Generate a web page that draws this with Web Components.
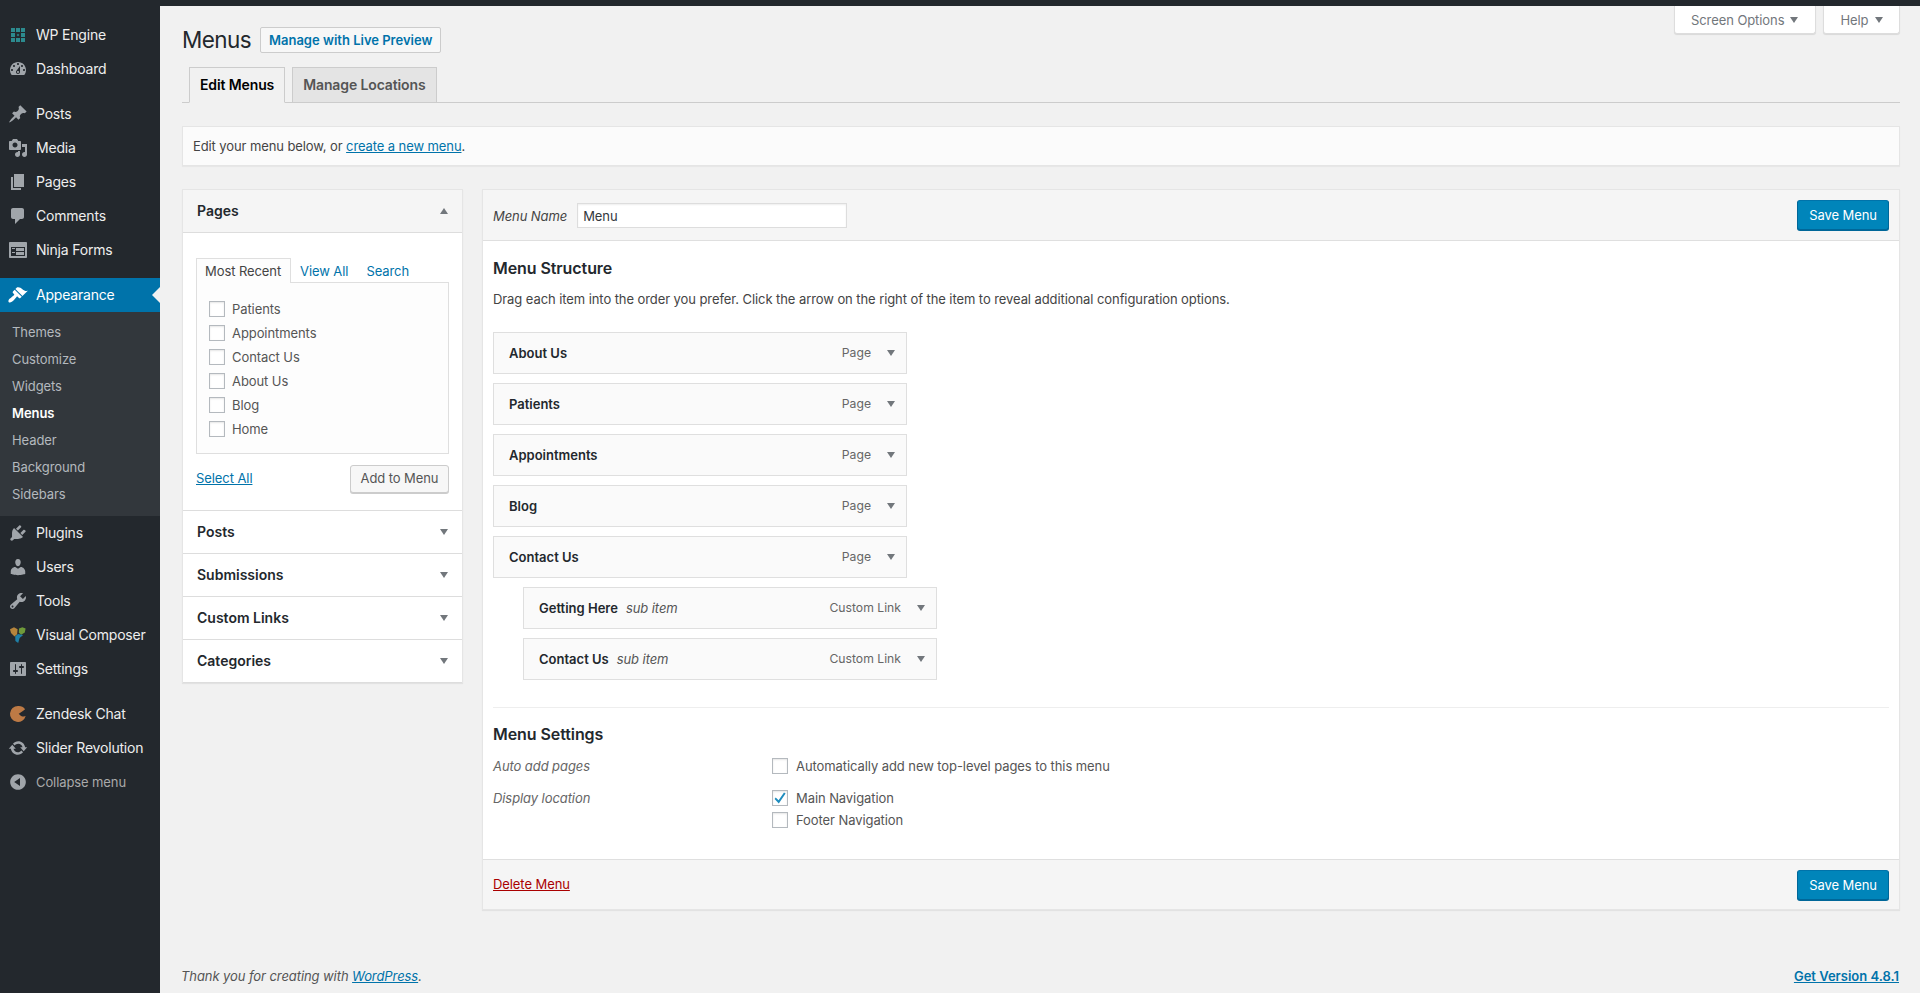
<!DOCTYPE html>
<html lang="en"><head><meta charset="utf-8"><title>Menus</title>
<style>
html,body{margin:0;height:993px;overflow:hidden;background:#f1f1f1}
body{font:13px/1.4 Inter,"Liberation Sans",sans-serif;color:#444;font-kerning:normal;letter-spacing:-.08px}
wp-admin{display:grid;grid-template-columns:160px 1fr;grid-template-rows:6px 1fr;height:993px}
</style></head><body>
<wp-admin></wp-admin>
<script>
const I={
 dash:'<path d="M3.76 16h12.48c1.1-1.37 1.76-3.11 1.76-5 0-4.42-3.58-8-8-8s-8 3.58-8 8c0 1.89.66 3.63 1.76 5zM10 4c.55 0 1 .45 1 1s-.45 1-1 1-1-.45-1-1 .45-1 1-1zM6 6c.55 0 1 .45 1 1s-.45 1-1 1-1-.45-1-1 .45-1 1-1zm8 0c.55 0 1 .45 1 1s-.45 1-1 1-1-.45-1-1 .45-1 1-1zm-5.37 5.55L12 7v6c0 1.1-.9 2-2 2s-2-.9-2-2c0-.57.24-1.08.63-1.45zM4 10c.55 0 1 .45 1 1s-.45 1-1 1-1-.45-1-1 .45-1 1-1zm12 0c.55 0 1 .45 1 1s-.45 1-1 1-1-.45-1-1 .45-1 1-1zm-5 3c0-.55-.45-1-1-1s-1 .45-1 1 .45 1 1 1 1-.45 1-1z"/>',
 pin:'<path d="M10.44 3.02l1.82-1.82 6.36 6.35-1.83 1.82c-1.05-.68-2.48-.57-3.41.36l-.75.75c-.92.93-1.04 2.35-.35 3.41l-1.83 1.82-2.41-2.41-2.8 2.79c-.42.42-3.38 2.71-3.8 2.29s1.86-3.39 2.28-3.81l2.79-2.79L4.1 9.36l1.83-1.82c1.05.69 2.48.57 3.4-.36l.75-.75c.93-.92 1.05-2.35.36-3.41z"/>',
 media:'<path d="M13 11V4c0-.55-.45-1-1-1h-1.67L9 1H5L3.67 3H2c-.55 0-1 .45-1 1v7c0 .55.45 1 1 1h10c.55 0 1-.45 1-1zM7 4.5c1.38 0 2.5 1.12 2.5 2.5S8.38 9.5 7 9.5 4.5 8.38 4.5 7 5.62 4.5 7 4.5zM14 6h5v10.5c0 1.38-1.12 2.5-2.5 2.5S14 17.88 14 16.5s1.12-2.5 2.5-2.5c.17 0 .34.02.5.05V9h-3V6zm-4 8.05V13h2v3.5c0 1.38-1.12 2.5-2.5 2.5S7 17.88 7 16.5 8.12 14 9.5 14c.17 0 .34.02.5.05z"/>',
 page:'<path d="M6 15V2h10v13H6zm-1 1h8v2H3V5h2v11z"/>',
 comment:'<path d="M5 2h9c1.1 0 2 .9 2 2v7c0 1.1-.9 2-2 2h-2l-5 5v-5H5c-1.1 0-2-.9-2-2V4c0-1.1.9-2 2-2z"/>',
 forms:'<path d="M2 2h16c.55 0 1 .45 1 1v14c0 .55-.45 1-1 1H2c-.55 0-1-.45-1-1V3c0-.55.45-1 1-1zm15 14V7H3v9h14zM4 8v1h3V8H4zm4 0v3h8V8H8zm-4 4v1h3v-1H4zm4 0v3h8v-3H8z"/>',
 brush:'<path d="M14.48 11.06L7.41 3.99l1.5-1.5c.5-.56 2.3-.47 3.51.32 1.21.8 1.43 1.28 2.91 2.1 1.18.64 2.45 1.26 4.45.85zm-.71.71L6.7 4.7 4.93 6.47c-.39.39-.39 1.02 0 1.41l1.06 1.06c.39.39.39 1.03 0 1.42-.6.6-1.43 1.11-2.21 1.69-.35.26-.7.53-1.01.84C1.43 13.23.4 14.91.4 15.9c0 .99.6 1.58 1.58 1.58s2.67-1.04 3.99-2.36c.31-.31.58-.66.84-1.01.58-.78 1.09-1.61 1.69-2.21.39-.39 1.02-.39 1.41 0l1.06 1.06c.39.39 1.02.39 1.41 0z"/>',
 plug:'<path d="M13.11 4.36L9.87 7.6 8 5.73l3.24-3.24c.35-.34 1.05-.2 1.56.32.52.51.66 1.21.31 1.55zm-8 1.77l.91-1.12 9.01 9.01-1.19.84c-.71.71-2.63 1.16-3.82 1.16H6.14L4.9 17.26c-.59.59-1.54.59-2.12 0-.59-.58-.59-1.53 0-2.12l1.24-1.24v-3.88c0-1.13.4-3.19 1.09-3.89zm7.26 3.97l3.24-3.24c.34-.35 1.04-.21 1.55.31.52.51.66 1.21.31 1.55l-3.24 3.25z"/>',
 user:'<path d="M10 9.25c-2.27 0-2.73-3.44-2.73-3.44C7 4.02 7.82 2 9.97 2c2.16 0 2.98 2.02 2.71 3.81 0 0-.41 3.44-2.68 3.44zm0 2.57L12.72 10c2.39 0 4.52 2.33 4.52 4.53v2.49s-3.65 1.13-7.24 1.13c-3.65 0-7.24-1.13-7.24-1.13v-2.49c0-2.25 1.94-4.48 4.47-4.48z"/>',
 tool:'<path d="M16.68 9.77c-1.34 1.34-3.3 1.67-4.95.99l-5.41 6.52c-.99.99-2.59.99-3.58 0s-.99-2.59 0-3.57l6.52-5.42c-.68-1.65-.35-3.61.99-4.95 1.28-1.28 3.12-1.62 4.72-1.06l-2.89 2.89 2.82 2.82 2.86-2.87c.53 1.58.18 3.39-1.08 4.65zM3.81 16.21c.4.39 1.04.39 1.43 0 .4-.4.4-1.04 0-1.43-.39-.4-1.03-.4-1.43 0-.39.39-.39 1.03 0 1.43z"/>',
 set:'<path d="M18 16V4c0-.55-.45-1-1-1H3c-.55 0-1 .45-1 1v12c0 .55.45 1 1 1h14c.55 0 1-.45 1-1zM8 11h1c.55 0 1 .45 1 1s-.45 1-1 1H8v1.5c0 .28-.22.5-.5.5s-.5-.22-.5-.5V13H6c-.55 0-1-.45-1-1s.45-1 1-1h1V5.5c0-.28.22-.5.5-.5s.5.22.5.5V11zm5-2h-1c-.55 0-1-.45-1-1s.45-1 1-1h1V5.5c0-.28.22-.5.5-.5s.5.22.5.5V7h1c.55 0 1 .45 1 1s-.45 1-1 1h-1v5.5c0 .28-.22.5-.5.5s-.5-.22-.5-.5V9z"/>',
 sync:'<path d="M10.2 3.28c3.53 0 6.43 2.61 6.92 6h2.08l-3.5 4-3.5-4h2.32c-.45-1.97-2.21-3.45-4.32-3.45-1.45 0-2.73.71-3.54 1.78L4.95 5.66C6.23 4.2 8.11 3.28 10.2 3.28zm-.4 13.44c-3.52 0-6.43-2.61-6.92-6H.8l3.5-4c1.17 1.33 2.33 2.67 3.5 4H5.48c.45 1.97 2.21 3.45 4.32 3.45 1.45 0 2.73-.71 3.54-1.78l1.71 1.95c-1.28 1.46-3.15 2.38-5.25 2.38z"/>',
 collapse:'<path d="M10 2.16c4.33 0 7.84 3.51 7.84 7.84s-3.51 7.84-7.84 7.84S2.16 14.33 2.16 10 5.71 2.16 10 2.16zm2 11.72V6.12L6.18 9.97z"/>',
 wpe:'<path fill="#2c8a8e" d="M3 3h4v4H3zM8 3h4v4H8zM13 3h4v4h-4zM3 8h4v4H3zM13 8h4v4h-4zM3 13h4v4H3zM8 13h4v4H8zM13 13h4v4h-4z"/><path fill="#2c8a8e" opacity=".75" d="M8.9 8.9h2.2v2.2H8.9z"/>',
 vc:'<path fill="#b5843c" d="M2 4.2l4-2 3.6 2-.5 5-2.6 2.3L3 8z"/><path fill="#6f9a3a" d="M11 3.6l3.4-1.4 3.2 1.4-.8 4-3.6 2.2-2.4-2z"/><path fill="#1f7fa6" d="M7.2 11.2 10 9l5.2 1-3.6 3-1.4 5-2.8-2z"/>',
 zen:'<path fill="#bd7a45" d="M10 2a8 8 0 1 0 7.7 10.1c-1 .6-2.9.7-4.6-.2-1.1-.6-1.9-1.4-2.4-2.1.8-.5 3.3-2 6.4-4.6A8 8 0 0 0 10 2z"/>'
};
const ic=n=>`<svg viewBox="0 0 20 20" width="20" height="20" fill="currentColor" aria-hidden="true">${I[n]}</svg>`;

function def(tag,css,html){
 customElements.define(tag,class extends HTMLElement{
  connectedCallback(){
   if(this.shadowRoot)return;
   const s=this.attachShadow({mode:'open'});
   s.innerHTML=`<style>${css}</style>`+(typeof html==='function'?html(this):html);
  }
 });
}

def('side-item',`
 :host{display:flex;align-items:center;height:34px;font-size:14px;letter-spacing:-.2px;color:#eee;padding-left:8px;box-sizing:border-box;position:relative}
 svg{color:#a0a5aa;flex:none}
 span{margin-left:8px;line-height:18px;position:relative;top:-.5px}
 :host([current]){background:#0073aa;color:#fff}
 :host([current]) svg{color:#fff}
 :host([current])::after{content:"";position:absolute;right:0;top:9px;border:8px solid transparent;border-right-color:#f1f1f1;border-left:0}
 :host([dim]){color:#aaa;font-size:13px;letter-spacing:-.1px}
`,h=>`${ic(h.getAttribute('icon'))}<span><slot></slot></span>`);

def('side-sub',`
 :host{display:block;background:#32373c;padding:7px 0 8px;font-size:13px;color:#b4b9be}
 ::slotted(div){height:27px;line-height:27px;padding-left:12px}
`,`<slot></slot>`);

def('side-bar',`
 :host{display:block;background:#23282d;padding-top:12px;grid-column:1;grid-row:2}
 ::slotted(hr){border:0;height:11px;margin:0}
`,`<slot></slot>`);

def('top-tab',`
 :host{display:block;background:#fff;border:1px solid #ddd;border-top:0;border-radius:0 0 3px 3px;box-shadow:0 1px 1px rgba(0,0,0,.1);height:27px;box-sizing:content-box;color:#72777c;font-size:13px;line-height:28px;padding:0 16.5px}
 i{display:inline-block;border:4.5px solid transparent;border-top:6px solid #72777c;border-bottom:0;margin-left:6px;vertical-align:2px}
`,`<slot></slot><i></i>`);

def('page-head',`
 :host{display:flex;justify-content:space-between;align-items:flex-start;height:61px}
 .l{display:flex;align-items:center;padding-top:21px;height:26px}
 h1{margin:0;font-size:22.5px;letter-spacing:-.6px;font-weight:400;color:#23282d;line-height:26px;width:68px}
 a{margin-left:10px;border:1px solid #ccc;border-radius:2px;background:#f7f7f7;color:#0073aa;font-size:13px;letter-spacing:0;font-weight:600;height:24px;line-height:24px;padding:0 8px;display:block}
 .r{display:flex;gap:7px}
`,`<div class="l"><h1>Menus</h1><a>Manage with Live Preview</a></div><div class="r"><slot></slot></div>`);

def('nav-tabs',`
 :host{display:flex;gap:7px;padding-left:7px;border-bottom:1px solid #ccc;height:35px}
 ::slotted(div){border:1px solid #ccc;background:#e4e4e4;color:#555;font-size:14px;letter-spacing:-.12px;font-weight:600;line-height:24px;padding:5px 10px;height:24px;box-sizing:content-box}
 ::slotted(.on){background:#f1f1f1;color:#000;border-bottom-color:#f1f1f1}
`,`<slot></slot>`);

def('manage-box',`
 :host{display:block;margin-top:23px;background:#fbfbfb;border:1px solid #e5e5e5;box-shadow:0 1px 1px rgba(0,0,0,.04);height:38px;line-height:38px;padding-left:10px;font-size:13px;letter-spacing:-.1px;color:#444}
 a{color:#0073aa;text-decoration:underline}
`,`Edit your menu below, or <a>create a new menu</a>.`);

def('acc-sec',`
 :host{display:block;border-bottom:1px solid #ddd;background:#fff}
 .h{display:flex;justify-content:space-between;align-items:center;height:42px;padding:0 14px;font-size:14px;letter-spacing:0;font-weight:600;color:#23282d}
 :host([open]) .h{background:#f5f5f5;border-bottom:1px solid #ddd;height:43px;box-sizing:border-box}
 i{border:4.5px solid transparent;border-top:6px solid #72777c;border-bottom:0}
 :host([open]) i{border-top:0;border-bottom:6px solid #72777c}
`,h=>`<div class="h"><span>${h.getAttribute('label')}</span><i></i></div><slot></slot>`);

def('acc-panel',`
 :host{display:block;background:#fff;border:1px solid #e5e5e5;border-bottom:0;box-shadow:0 1px 1px rgba(0,0,0,.06);width:279px;flex:none;align-self:flex-start}
`,`<slot></slot>`);

def('check-box',`
 :host{display:inline-block;flex:none;width:14px;height:14px;border:1px solid #b4b9be;background:#fff;box-shadow:inset 0 1px 2px rgba(0,0,0,.1);position:relative}
 svg{position:absolute;left:-1px;top:-1px}
`,h=>h.hasAttribute('checked')?`<svg width="16" height="16" viewBox="0 0 16 16"><path fill="#1e8cbe" d="M6.6 10.2 3.7 7.6 2.6 8.9l4.2 4.5L13.6 3.5 12 2.4z"/></svg>`:``);

def('check-row',`
 :host{display:flex;align-items:center;height:16px;gap:var(--gap,7px);font-size:13px;color:#555}
`,h=>`<check-box ${h.hasAttribute('checked')?'checked':''}></check-box><span><slot></slot></span>`);

def('page-picker',`
 :host{display:block;padding:25px 13px 17px 13px;font-size:13px}
 .t{display:flex;height:24px}
 .t a{color:#0073aa;line-height:26px;padding:0 9px}
 .t b{font-weight:400;color:#444;background:#fdfdfd;border:1px solid #dfdfdf;border-bottom:0;height:25px;line-height:24px;padding:0 8px;position:relative;z-index:1;box-sizing:border-box;width:95px}
 .box{border:1px solid #dfdfdf;background:#fdfdfd;height:172px;box-sizing:border-box;padding:18px 0 0 12px;display:flex;flex-direction:column;gap:8px}
 .f{display:flex;justify-content:space-between;align-items:center;margin-top:10.5px}
 .f a{color:#0073aa;text-decoration:underline}
 button{font:inherit;letter-spacing:inherit;color:#555;background:#f7f7f7;border:1px solid #ccc;border-radius:3px;box-shadow:0 1px 0 #ccc;height:28px;width:99px;padding:0}
`,`<div class="t"><b>Most Recent</b><a>View All</a><a>Search</a></div>
<div class="box"><slot></slot></div>
<div class="f"><a>Select All</a><button>Add to Menu</button></div>`);

def('save-btn',`
 :host{display:block;width:90px;height:28px;background:#0085ba;border:1px solid;border-color:#0073aa #006799 #006799;border-radius:3px;box-shadow:0 1px 0 #006799;color:#fff;font-size:13px;line-height:28px;text-align:center}
`,`<slot></slot>`);

def('menu-item',`
 :host{display:flex;align-items:center;width:397px;height:40px;border:1px solid #dfdfdf;background:#fafafa;font-size:13px;margin-bottom:9px;padding-left:15px;box-sizing:content-box;color:#23282d}
 :host([sub]){margin-left:30px}
 b{font-weight:600;letter-spacing:0}
 em{margin-left:8px;color:#555;font-style:italic}
 .ty{margin-left:auto;color:#666;font-size:12.2px;letter-spacing:0}
 i{border:4.5px solid transparent;border-top:6px solid #72777c;border-bottom:0;margin:0 11px 0 16px}
`,h=>`<b><slot></slot></b>${h.hasAttribute('sub')?'<em>sub item</em>':''}<span class="ty">${h.getAttribute('type')}</span><i></i>`);

def('menu-panel',`
 :host{display:block;flex:1;min-width:0;background:#fff;border:1px solid #e5e5e5;box-shadow:0 1px 1px rgba(0,0,0,.06);font-size:13px;height:721px;box-sizing:border-box;--gap:8px}
 .top,.bot{background:#f5f5f5;display:flex;align-items:center;justify-content:space-between;padding:0 10px}
 .top{height:50px;border-bottom:1px solid #dfdfdf}
 .bot{height:49px;border-top:1px solid #dfdfdf}
 .nm{display:flex;align-items:center;padding-top:1px}
 label{font-style:italic;color:#444;position:relative;top:1px}
 .inp{margin-left:10px;height:23px;line-height:25px;border:1px solid #ddd;background:#fff;box-shadow:inset 0 1px 2px rgba(0,0,0,.07);color:#32373c;padding-left:5px;box-sizing:content-box;width:263px}
 .body{padding:0 10px;height:618px;box-sizing:border-box}
 h3{font-size:16px;font-weight:600;color:#23282d;margin:0;line-height:22px}
 .s1{padding-top:16px}
 p{margin:9px 0 0;line-height:22px;color:#444}
 .items{margin-top:22px}
 .div{border-top:1px solid #eee;margin-top:27px;padding-top:15px}
 .row{display:grid;grid-template-columns:279px 1fr}
 .lab{font-style:italic;color:#666;line-height:16px}
 .col{display:flex;flex-direction:column;gap:6px}
 a{color:#a00;text-decoration:underline}
`,`<div class="top"><div class="nm"><label>Menu Name</label><div class="inp">Menu</div></div><save-btn>Save Menu</save-btn></div>
<div class="body"><div class="s1"><h3>Menu Structure</h3><p>Drag each item into the order you prefer. Click the arrow on the right of the item to reveal additional configuration options.</p></div>
<div class="items"><slot></slot></div>
<div class="div"><h3>Menu Settings</h3>
<div class="row" style="margin-top:13px"><div class="lab">Auto add pages</div><div class="col"><check-row>Automatically add new top-level pages to this menu</check-row></div></div>
<div class="row" style="margin-top:16px"><div class="lab">Display location</div><div class="col"><check-row checked>Main Navigation</check-row><check-row>Footer Navigation</check-row></div></div>
</div></div>
<div class="bot"><a>Delete Menu</a><save-btn>Save Menu</save-btn></div>`);

def('page-foot',`
 :host{display:flex;justify-content:space-between;margin:56px 1px 0 -1px;font-size:13px;line-height:20px;color:#555}
 span{font-style:italic}
 a{color:#0073aa;text-decoration:underline}
 b{font-weight:600;letter-spacing:0;color:#0073aa;text-decoration:underline}
`,`<span>Thank you for creating with <a>WordPress</a>.</span><b>Get Version 4.8.1</b>`);

def('page-main',`
 :host{display:block;grid-column:2;grid-row:2;padding:0 20px 0 22px;min-width:0}
 .cols{display:flex;gap:19px;margin-top:23px}
`,`<slot name="head"></slot><div class="cols"><slot name="l"></slot><slot name="r"></slot></div><slot name="foot"></slot>`);

def('wp-admin',`
 :host{display:grid;grid-template-columns:160px 1fr;grid-template-rows:6px 1fr;height:993px}
 .bar{grid-column:1/3;background:#23282d}
`,`<div class="bar"></div>
<side-bar>
 <side-item icon="wpe">WP Engine</side-item><side-item icon="dash">Dashboard</side-item><hr>
 <side-item icon="pin">Posts</side-item><side-item icon="media">Media</side-item><side-item icon="page">Pages</side-item><side-item icon="comment">Comments</side-item><side-item icon="forms">Ninja Forms</side-item><hr>
 <side-item icon="brush" current>Appearance</side-item>
 <side-sub><div>Themes</div><div>Customize</div><div>Widgets</div><div style="color:#fff;font-weight:600">Menus</div><div>Header</div><div>Background</div><div>Sidebars</div></side-sub>
 <side-item icon="plug">Plugins</side-item><side-item icon="user">Users</side-item><side-item icon="tool">Tools</side-item><side-item icon="vc">Visual Composer</side-item><side-item icon="set">Settings</side-item><hr>
 <side-item icon="zen">Zendesk Chat</side-item><side-item icon="sync">Slider Revolution</side-item><side-item icon="collapse" dim>Collapse menu</side-item>
</side-bar>
<page-main>
 <div slot="head">
  <page-head><top-tab>Screen Options</top-tab><top-tab>Help</top-tab></page-head>
  <nav-tabs><div class="on">Edit Menus</div><div>Manage Locations</div></nav-tabs>
  <manage-box></manage-box>
 </div>
 <acc-panel slot="l">
  <acc-sec label="Pages" open><page-picker>
   <check-row>Patients</check-row><check-row>Appointments</check-row><check-row>Contact Us</check-row><check-row>About Us</check-row><check-row>Blog</check-row><check-row>Home</check-row>
  </page-picker></acc-sec>
  <acc-sec label="Posts"></acc-sec><acc-sec label="Submissions"></acc-sec><acc-sec label="Custom Links"></acc-sec><acc-sec label="Categories"></acc-sec>
 </acc-panel>
 <menu-panel slot="r">
  <menu-item type="Page">About Us</menu-item><menu-item type="Page">Patients</menu-item><menu-item type="Page">Appointments</menu-item><menu-item type="Page">Blog</menu-item><menu-item type="Page">Contact Us</menu-item>
  <menu-item type="Custom Link" sub>Getting Here</menu-item><menu-item type="Custom Link" sub>Contact Us</menu-item>
 </menu-panel>
 <page-foot slot="foot"></page-foot>
</page-main>`);
</script>
</body></html>
